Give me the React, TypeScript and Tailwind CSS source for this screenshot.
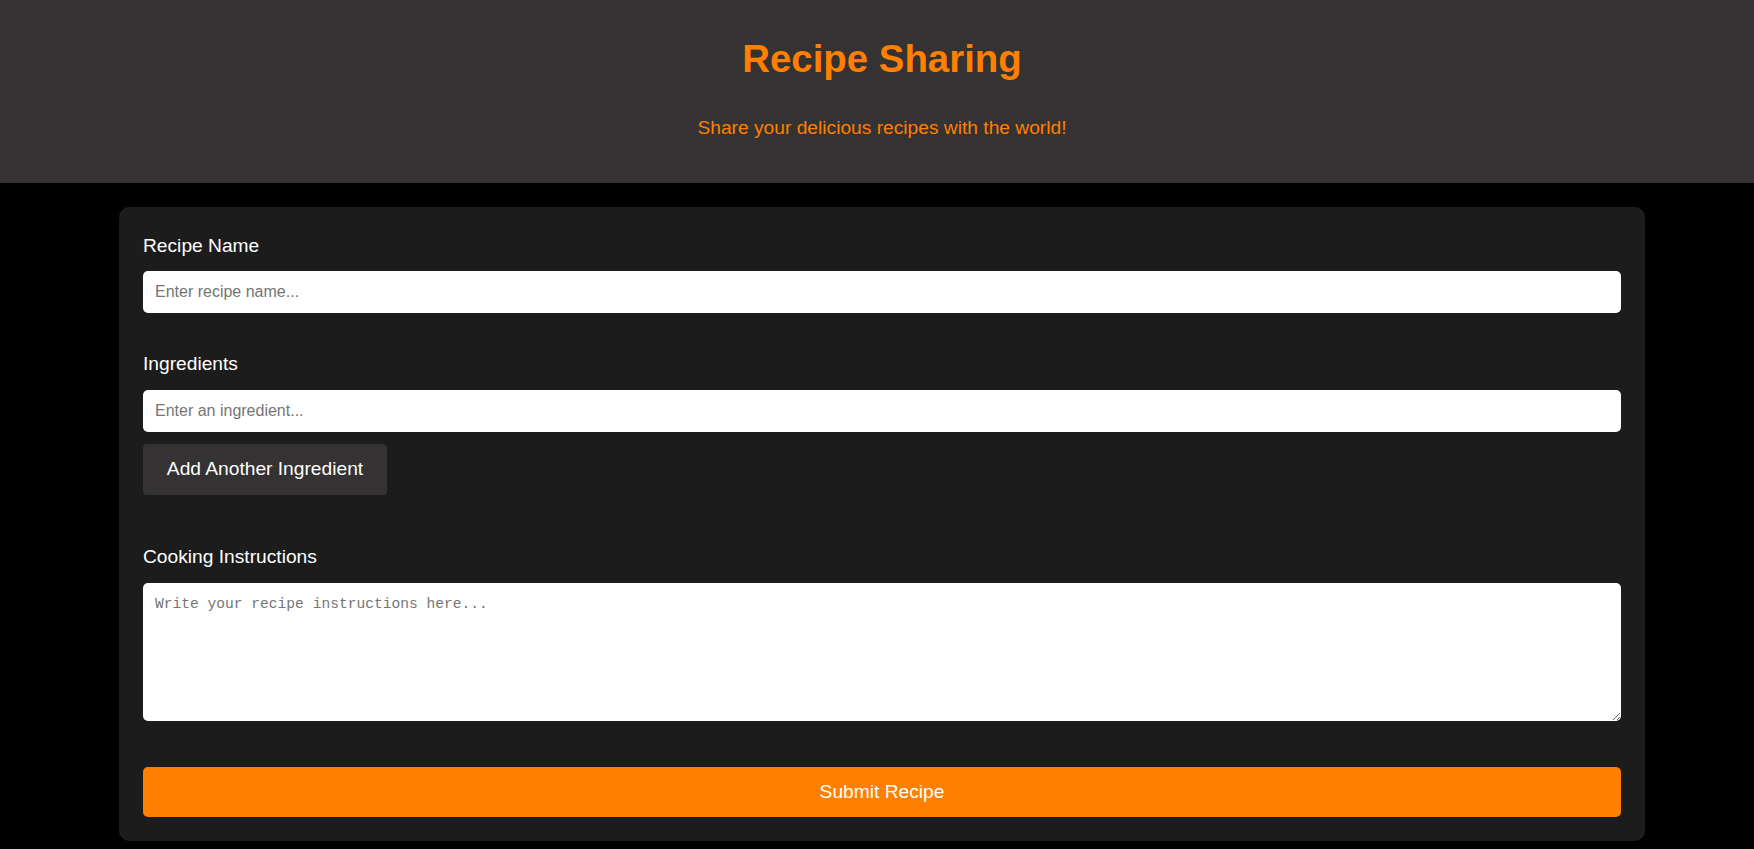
import { useState } from "react";

export default function App() {
  const [ingredients, setIngredients] = useState<string[]>([""]);

  const addIngredient = () => {
    setIngredients([...ingredients, ""]);
  };

  return (
    <div className="min-h-[849px] bg-black font-['Liberation_Sans',Arial,sans-serif]">
      {/* header */}
      <header className="flex h-[183px] flex-col items-center bg-[#343233] pl-[10px] pt-[37px]">
        <h1 className="text-[38.4px] font-bold leading-[44px] text-[#ff7f00]">
          Recipe Sharing
        </h1>
        <p className="mt-[36px] text-[19.2px] leading-[22px] text-[#ff7f00]">
          Share your delicious recipes with the world!
        </p>
      </header>

      {/* form card */}
      <div className="ml-[119px] mt-[24px] w-[1526px] rounded-[10px] bg-[#1c1c1c] px-6 pb-6 pt-[28px]">
        <div className="flex flex-col">
          <label className="mb-[14px] block text-[19.2px] leading-[22px] text-white">
            Recipe Name
          </label>
          <input
            type="text"
            placeholder="Enter recipe name..."
            className="h-[42px] w-full rounded-[5px] bg-white px-3 text-[16px] text-black outline-none placeholder:text-[#757575]"
          />
        </div>

        <div className="mt-[40px] flex flex-col">
          <label className="mb-[15px] block text-[19.2px] leading-[22px] text-white">
            Ingredients
          </label>
          {ingredients.map((item, i) => (
            <input
              key={i}
              type="text"
              defaultValue={item}
              placeholder="Enter an ingredient..."
              className="mb-3 h-[42px] w-full rounded-[5px] bg-white px-3 text-[16px] text-black outline-none placeholder:text-[#757575]"
            />
          ))}
          <button
            type="button"
            onClick={addIngredient}
            className="h-[51px] w-[244px] rounded-[4px] bg-[#343233] text-[19.2px] text-white"
          >
            Add Another Ingredient
          </button>
        </div>

        <div className="mt-[51px] flex flex-col">
          <label className="mb-[15px] block text-[19.2px] leading-[22px] text-white">
            Cooking Instructions
          </label>
          <textarea
            placeholder="Write your recipe instructions here..."
            className="h-[138px] w-full rounded-[5px] bg-white px-3 py-[12px] font-['Liberation_Mono',monospace] text-[14.6px] leading-[18px] text-black outline-none placeholder:text-[#757575]"
          />
        </div>

        <button
          type="button"
          className="mt-[46px] h-[50px] w-full rounded-[5px] bg-[#ff7f00] text-[19.2px] text-white"
        >
          Submit Recipe
        </button>
      </div>
    </div>
  );
}
